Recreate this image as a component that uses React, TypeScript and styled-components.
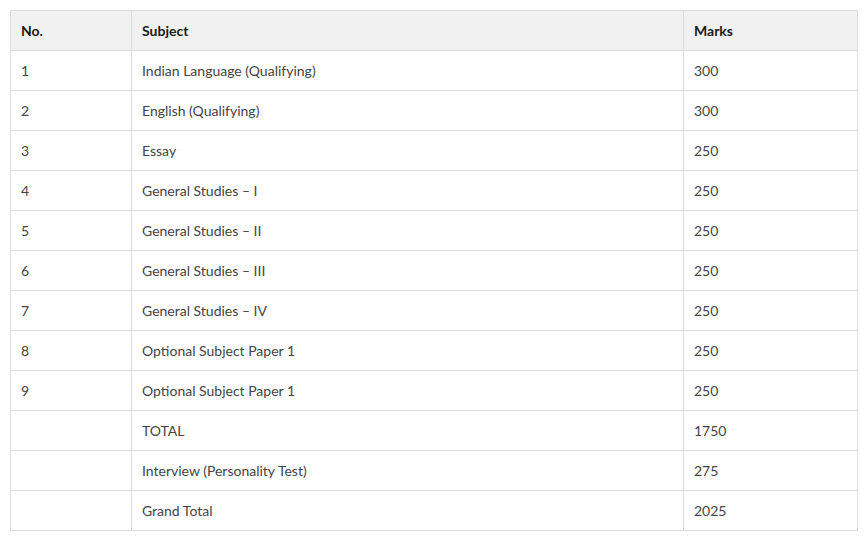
import React from "react";
import styled, { createGlobalStyle } from "styled-components";

const Global = createGlobalStyle`
  html, body { margin: 0; padding: 0; background: #fff; }
  body { font-family: Lato, "Open Sans", sans-serif; }
`;

const Page = styled.div`
  padding: 10px 7px 10px 10px;
`;

const Table = styled.table`
  width: 847px;
  border-collapse: collapse;
  table-layout: fixed;
  font-family: Lato, sans-serif;
  font-size: 14px;
`;

const Th = styled.th<{ $w: number }>`
  width: ${(p) => p.$w}px;
  height: 40px;
  box-sizing: border-box;
  padding: 0 10px;
  text-align: left;
  font-weight: 700;
  color: #1a1a1a;
  background: #f1f1f1;
  border: 1px solid #dcdcdc;
`;

const Td = styled.td`
  height: 40px;
  box-sizing: border-box;
  padding: 0 10px;
  color: #444;
  border: 1px solid #dcdcdc;
`;

const rows: [string, string, string][] = [
  ["1", "Indian Language (Qualifying)", "300"],
  ["2", "English (Qualifying)", "300"],
  ["3", "Essay", "250"],
  ["4", "General Studies – I", "250"],
  ["5", "General Studies – II", "250"],
  ["6", "General Studies – III", "250"],
  ["7", "General Studies – IV", "250"],
  ["8", "Optional Subject Paper 1", "250"],
  ["9", "Optional Subject Paper 1", "250"],
  ["", "TOTAL", "1750"],
  ["", "Interview (Personality Test)", "275"],
  ["", "Grand Total", "2025"],
];

export default function App() {
  return (
    <Page>
      <Global />
      <Table>
        <thead>
          <tr>
            <Th $w={121}>No.</Th>
            <Th $w={552}>Subject</Th>
            <Th $w={174}>Marks</Th>
          </tr>
        </thead>
        <tbody>
          {rows.map((r, i) => (
            <tr key={i}>
              <Td>{r[0]}</Td>
              <Td>{r[1]}</Td>
              <Td>{r[2]}</Td>
            </tr>
          ))}
        </tbody>
      </Table>
    </Page>
  );
}
